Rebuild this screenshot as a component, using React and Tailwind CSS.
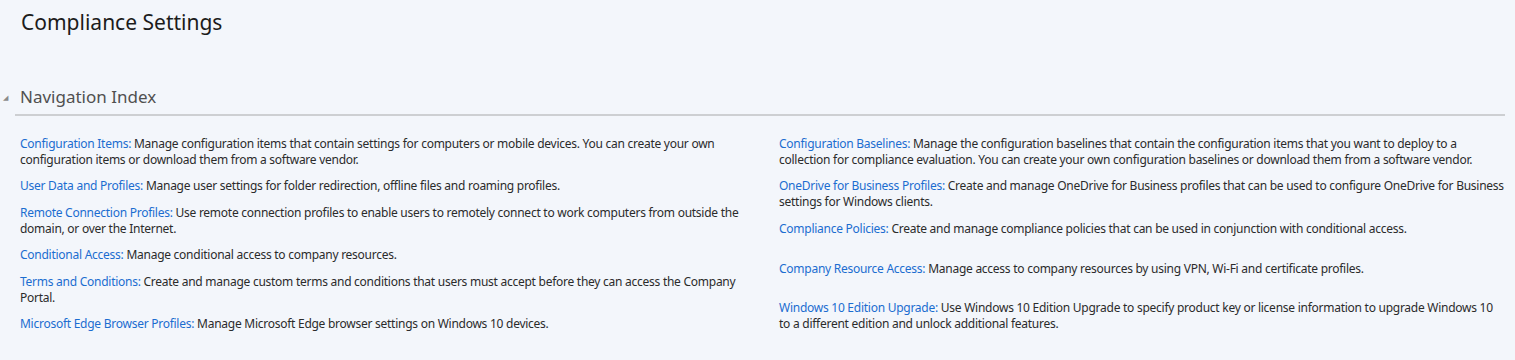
import React from 'react';

const leftItems = [
  { title: 'Configuration Items', text: 'Manage configuration items that contain settings for computers or mobile devices. You can create your own configuration items or download them from a software vendor.', mt: 'mt-0' },
  { title: 'User Data and Profiles', text: 'Manage user settings for folder redirection, offline files and roaming profiles.', mt: 'mt-[10px]' },
  { title: 'Remote Connection Profiles', text: 'Use remote connection profiles to enable users to remotely connect to work computers from outside the domain, or over the Internet.', mt: 'mt-[11px]' },
  { title: 'Conditional Access', text: 'Manage conditional access to company resources.', mt: 'mt-[10px]' },
  { title: 'Terms and Conditions', text: 'Create and manage custom terms and conditions that users must accept before they can access the Company Portal.', mt: 'mt-[11px]' },
  { title: 'Microsoft Edge Browser Profiles', text: 'Manage Microsoft Edge browser settings on Windows 10 devices.', mt: 'mt-[10px]' },
];

const rightItems = [
  { title: 'Configuration Baselines', text: 'Manage the configuration baselines that contain the configuration items that you want to deploy to a collection for compliance evaluation. You can create your own configuration baselines or download them from a software vendor.', mt: 'mt-0' },
  { title: 'OneDrive for Business Profiles', text: 'Create and manage OneDrive for Business profiles that can be used to configure OneDrive for Business settings for Windows clients.', mt: 'mt-[10px]' },
  { title: 'Compliance Policies', text: 'Create and manage compliance policies that can be used in conjunction with conditional access.', mt: 'mt-[11px]' },
  { title: 'Company Resource Access', text: 'Manage access to company resources by using VPN, Wi-Fi and certificate profiles.', mt: 'mt-[24px]' },
  { title: 'Windows 10 Edition Upgrade', text: 'Use Windows 10 Edition Upgrade to specify product key or license information to upgrade Windows 10 to a different edition and unlock additional features.', mt: 'mt-[23px]' },
];

const Entry = ({ item }) => (
  <p className={`${item.mt} text-[12px] leading-[16px] tracking-[-0.26px] text-[#2b2b2b]`}>
    <span className="text-[#1b6dd0]">{item.title}:</span> {item.text}
  </p>
);

export default function App() {
  return (
    <div className="w-[1515px] h-[360px] bg-[#f3f6fb] font-['Noto_Sans',sans-serif] overflow-hidden">
      <h1 className="pl-[21px] pt-[8px] text-[21px] leading-[28px] text-[#1c1c1c]">Compliance Settings</h1>

      <div className="mt-[49px] mr-[10px] ml-[15px] border-b-2 border-[#cdcfd2]">
        <div className="flex items-center pb-[5px]">
          <span className="-ml-[12px] w-[12px] text-[7px] leading-none text-[#8a8a8a]">◢</span>
          <h2 className="ml-[5px] text-[17px] leading-[24px] text-[#505050]">Navigation Index</h2>
        </div>
      </div>

      <div className="grid grid-cols-[741px_726px] gap-x-[18px] pl-[20px] pt-[20px]">
        <div>
          {leftItems.map((item) => (
            <Entry key={item.title} item={item} />
          ))}
        </div>
        <div>
          {rightItems.map((item) => (
            <Entry key={item.title} item={item} />
          ))}
        </div>
      </div>
    </div>
  );
}
